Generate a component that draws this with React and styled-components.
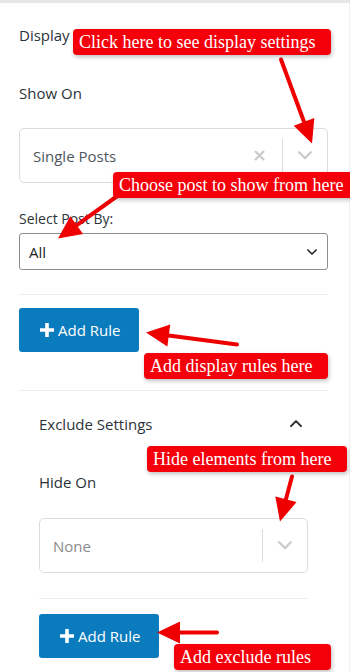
import React from "react";
import styled, { createGlobalStyle } from "styled-components";

const GlobalStyle = createGlobalStyle`
  html, body { margin: 0; padding: 0; background: #fff; }
  body { font-family: "Open Sans", "Noto Sans", sans-serif; color: #2c3338; }
  * { box-sizing: border-box; }
`;

const Page = styled.div`
  position: relative;
  width: 350px;
  height: 672px;
  overflow: hidden;
  background: #fff;
  border-top: 3px solid #e6e6e6;
`;

const Panel = styled.div`
  padding: 21px 21px 0 19px;
  border-right: 1px solid #f1f1f1;
  height: 100%;
`;

const Heading = styled.div`
  font-size: 15px;
  line-height: 22px;
  color: #2c3338;
  margin-top: ${(p) => p.$mt || 0}px;
`;

const Label = styled.div`
  font-size: 15px;
  line-height: 22px;
  font-weight: 500;
  color: #2c3338;
  margin-top: ${(p) => p.$mt || 0}px;
`;

const SmallLabel = styled.div`
  font-size: 14px;
  line-height: 20px;
  color: #2c3338;
  margin-top: ${(p) => p.$mt || 0}px;
`;

const ReactSelect = styled.div`
  display: flex;
  align-items: center;
  height: 55px;
  margin-top: ${(p) => p.$mt || 0}px;
  border: 1px solid #dcdcde;
  border-radius: 5px;
  padding-left: 13px;
`;

const SelectValue = styled.div`
  flex: 1;
  font-size: 15px;
  color: ${(p) => (p.$muted ? "#8a8a8a" : "#50575e")};
`;

const ClearBtn = styled.div`
  width: 26px;
  display: flex;
  justify-content: center;
  margin-right: 10px;
`;

const Sep = styled.div`
  width: 1px;
  align-self: stretch;
  margin: 10px 0;
  background: #dcdcde;
`;

const Caret = styled.div`
  width: 44px;
  display: flex;
  justify-content: center;
`;

const NativeSelect = styled.div`
  display: flex;
  align-items: center;
  justify-content: space-between;
  height: 37px;
  margin-top: ${(p) => p.$mt || 0}px;
  border: 1px solid #8c8f94;
  border-radius: 3px;
  padding: 0 10px 0 9px;
  font-size: 15px;
  color: #1e1e1e;
`;

const Divider = styled.hr`
  border: 0;
  border-top: 1px solid #ececec;
  margin: ${(p) => p.$mt || 0}px 0 0;
`;

const AddButton = styled.button`
  display: flex;
  align-items: center;
  gap: 4px;
  width: 120px;
  height: 44px;
  margin-top: ${(p) => p.$mt || 0}px;
  padding: 0 0 0 21px;
  border: 0;
  border-radius: 3px;
  background: #0a7bbd;
  color: #fff;
  font-family: "Open Sans", "Noto Sans", sans-serif;
  font-size: 15px;
`;

const SubSection = styled.div`
  padding: 0 20px;
`;

const ToggleRow = styled.div`
  display: flex;
  align-items: center;
  justify-content: space-between;
  margin-top: ${(p) => p.$mt || 0}px;
  padding-right: 6px;
`;

const Callout = styled.div`
  position: absolute;
  left: ${(p) => p.$x}px;
  top: ${(p) => p.$y}px;
  width: ${(p) => p.$w}px;
  height: 26px;
  padding-left: 6px;
  background: #f5000a;
  border-radius: 4px;
  box-shadow: 1px 2px 4px rgba(0, 0, 0, 0.25);
  color: #fff;
  font-family: "Liberation Serif", "Times New Roman", serif;
  font-size: 18px;
  line-height: 26px;
  white-space: nowrap;
`;

const ArrowLayer = styled.svg`
  position: absolute;
  left: 0;
  top: 0;
  pointer-events: none;
`;

const Chevron = ({ up, color = "#ccc", w = 12, sw = 2 }) => (
  <svg width={w} height={w * 0.6} viewBox="0 0 12 7" fill="none">
    <path
      d={up ? "M1 6 L6 1 L11 6" : "M1 1 L6 6 L11 1"}
      stroke={color}
      strokeWidth={sw}
      strokeLinecap="round"
      strokeLinejoin="round"
    />
  </svg>
);

const Cross = () => (
  <svg width="11" height="11" viewBox="0 0 11 11">
    <path d="M1 1 L10 10 M10 1 L1 10" stroke="#cccccc" strokeWidth="2.4" />
  </svg>
);

const Plus = () => (
  <svg width="14" height="14" viewBox="0 0 14 14">
    <path d="M7 0 V14 M0 7 H14" stroke="#fff" strokeWidth="3.6" />
  </svg>
);

const arrows = [
  // [tailX, tailY, tipX, tipY]
  [281, 58, 312, 142],
  [118, 194, 58, 237],
  [237, 343, 146, 331],
  [292, 475, 280, 520],
  [217, 631, 157, 631],
];

const Arrow = ({ a }) => {
  const [x1, y1, x2, y2] = a;
  const dx = x2 - x1;
  const dy = y2 - y1;
  const len = Math.hypot(dx, dy);
  const ux = dx / len;
  const uy = dy / len;
  const hl = 23;
  const hw = 11;
  const bx = x2 - ux * hl;
  const by = y2 - uy * hl;
  const px = -uy * hw;
  const py = ux * hw;
  return (
    <g>
      <line x1={x1} y1={y1} x2={bx + ux * 2} y2={by + uy * 2} stroke="#ee0000" strokeWidth="4" strokeLinecap="round" />
      <polygon points={`${x2},${y2} ${bx + px},${by + py} ${bx - px},${by - py}`} fill="#ee0000" />
    </g>
  );
};

export default function App() {
  return (
    <>
      <GlobalStyle />
      <Page>
        <Panel>
          <Heading>Display Settings</Heading>
          <Label $mt={36}>Show On</Label>
          <ReactSelect $mt={24}>
            <SelectValue>Single Posts</SelectValue>
            <ClearBtn>
              <Cross />
            </ClearBtn>
            <Sep />
            <Caret>
              <Chevron w={14} />
            </Caret>
          </ReactSelect>
          <SmallLabel $mt={26}>Select Post By:</SmallLabel>
          <NativeSelect $mt={4}>
            <span>All</span>
            <Chevron color="#1e1e1e" w={10} sw={1.8} />
          </NativeSelect>
          <Divider $mt={24} />
          <AddButton $mt={13}>
            <Plus />
            Add Rule
          </AddButton>
          <Divider $mt={38} />
          <SubSection>
            <ToggleRow $mt={22}>
              <Label>Exclude Settings</Label>
              <Chevron up color="#2c3338" w={12} sw={2} />
            </ToggleRow>
            <Label $mt={36}>Hide On</Label>
            <ReactSelect $mt={25}>
              <SelectValue $muted>None</SelectValue>
              <Sep />
              <Caret>
                <Chevron w={14} />
              </Caret>
            </ReactSelect>
            <Divider $mt={25} />
            <AddButton $mt={15}>
              <Plus />
              Add Rule
            </AddButton>
          </SubSection>
        </Panel>

        <ArrowLayer width="350" height="672" viewBox="0 0 350 669" style={{ top: -3 }}>
          {arrows.map((a, i) => (
            <Arrow key={i} a={a} />
          ))}
        </ArrowLayer>

        <Callout $x={73} $y={26} $w={258}>Click here to see display settings</Callout>
        <Callout $x={113} $y={169} $w={240}>Choose post to show from here</Callout>
        <Callout $x={144} $y={350} $w={184}>Add display rules here</Callout>
        <Callout $x={147} $y={443} $w={200}>Hide elements from here</Callout>
        <Callout $x={174} $y={641} $w={157}>Add exclude rules</Callout>
      </Page>
    </>
  );
}
